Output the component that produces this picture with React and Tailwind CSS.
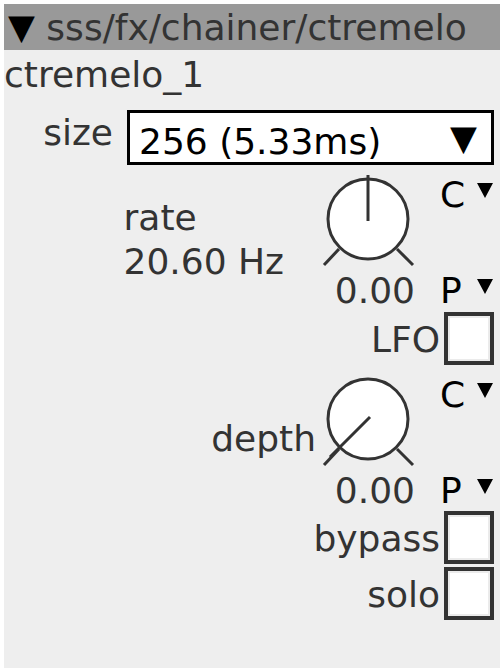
import React from "react";

const Tri = () => (
  <svg width="16" height="15" viewBox="0 0 16 15" className="block">
    <polygon points="0,0 16,0 8,15" fill="#000" />
  </svg>
);

function Knob({ pointer }) {
  return (
    <svg width="92" height="96" viewBox="0 0 92 96" className="block overflow-visible">
      <circle cx="46" cy="46" r="40" fill="#fff" stroke="#333" strokeWidth="3" />
      {pointer === "up" ? (
        <line x1="46" y1="2" x2="46" y2="48" stroke="#333" strokeWidth="3" />
      ) : (
        <line x1="48" y1="44" x2="8" y2="84" stroke="#333" strokeWidth="3" />
      )}
      <line x1="2" y1="92" x2="17" y2="76" stroke="#333" strokeWidth="3" />
      <line x1="75" y1="76" x2="91" y2="92" stroke="#333" strokeWidth="3" />
    </svg>
  );
}

function KnobBlock({ label, labelClass, pointer }) {
  return (
    <div className="flex h-[146px] items-start justify-end pr-[7px]">
      <div className={labelClass}>{label}</div>
      <div className="mt-[8px] flex w-[92px] flex-col">
        <Knob pointer={pointer} />
        <div className="-mr-[1px] mt-[1px] text-right">0.00</div>
      </div>
      <div className="ml-[26px] flex h-full w-[53px] flex-col justify-between pt-[9px] text-black">
        <div className="flex justify-between">
          <span>C</span>
          <span className="mt-[9px]"><Tri /></span>
        </div>
        <div className="flex justify-between">
          <span>P</span>
          <span className="mt-[9px]"><Tri /></span>
        </div>
      </div>
    </div>
  );
}

function Check({ label, className = "" }) {
  return (
    <div className={"flex items-center justify-end gap-[4px] pr-[6px] " + className}>
      <span className="mt-[2px]">{label}</span>
      <div className="h-[53px] w-[50px] border-[4px] border-[#333] bg-white shadow-[inset_0_0_0_2px_#ebebeb]" />
    </div>
  );
}

export default function App() {
  return (
    <div className="min-h-screen bg-white p-[4px]">
      <div className="h-[664px] w-[496px] bg-[#eeeeee] font-['DejaVu_Sans',sans-serif] text-[36px] leading-[41px] text-[#333]">
        {/* HEADER */}
        <div className="flex h-[46px] items-center bg-[#999999] pl-[4px]">
          <span className="text-[35px] text-black">▼</span>
          <span>&nbsp;sss/fx/chainer/ctremelo</span>
        </div>

        <div className="mt-[4px]">ctremelo_1</div>

        {/* SIZE */}
        <div className="mt-[15px] flex items-start justify-end gap-[14px] pr-[6px]">
          <span className="mt-[2px]">size</span>
          <div className="flex h-[55px] w-[367px] items-start justify-between border-[3px] border-black bg-white pl-[9px] pr-[14px] pt-[8px] text-black">
            <span>256 (5.33ms)</span>
            <span className="-mt-[3px] text-[35px]">▼</span>
          </div>
        </div>

        {/* RATE */}
        <KnobBlock
          pointer="up"
          labelClass="mr-[38px] mt-[31px] leading-[44px]"
          label={
            <>
              <div>rate</div>
              <div>20.60 Hz</div>
            </>
          }
        />
        <Check label="LFO" className="h-[54px]" />

        {/* DEPTH */}
        <KnobBlock pointer="down" labelClass="mr-[6px] mt-[53px]" label="depth" />
        <Check label="bypass" />
        <Check label="solo" className="mt-[3px]" />
      </div>
    </div>
  );
}
